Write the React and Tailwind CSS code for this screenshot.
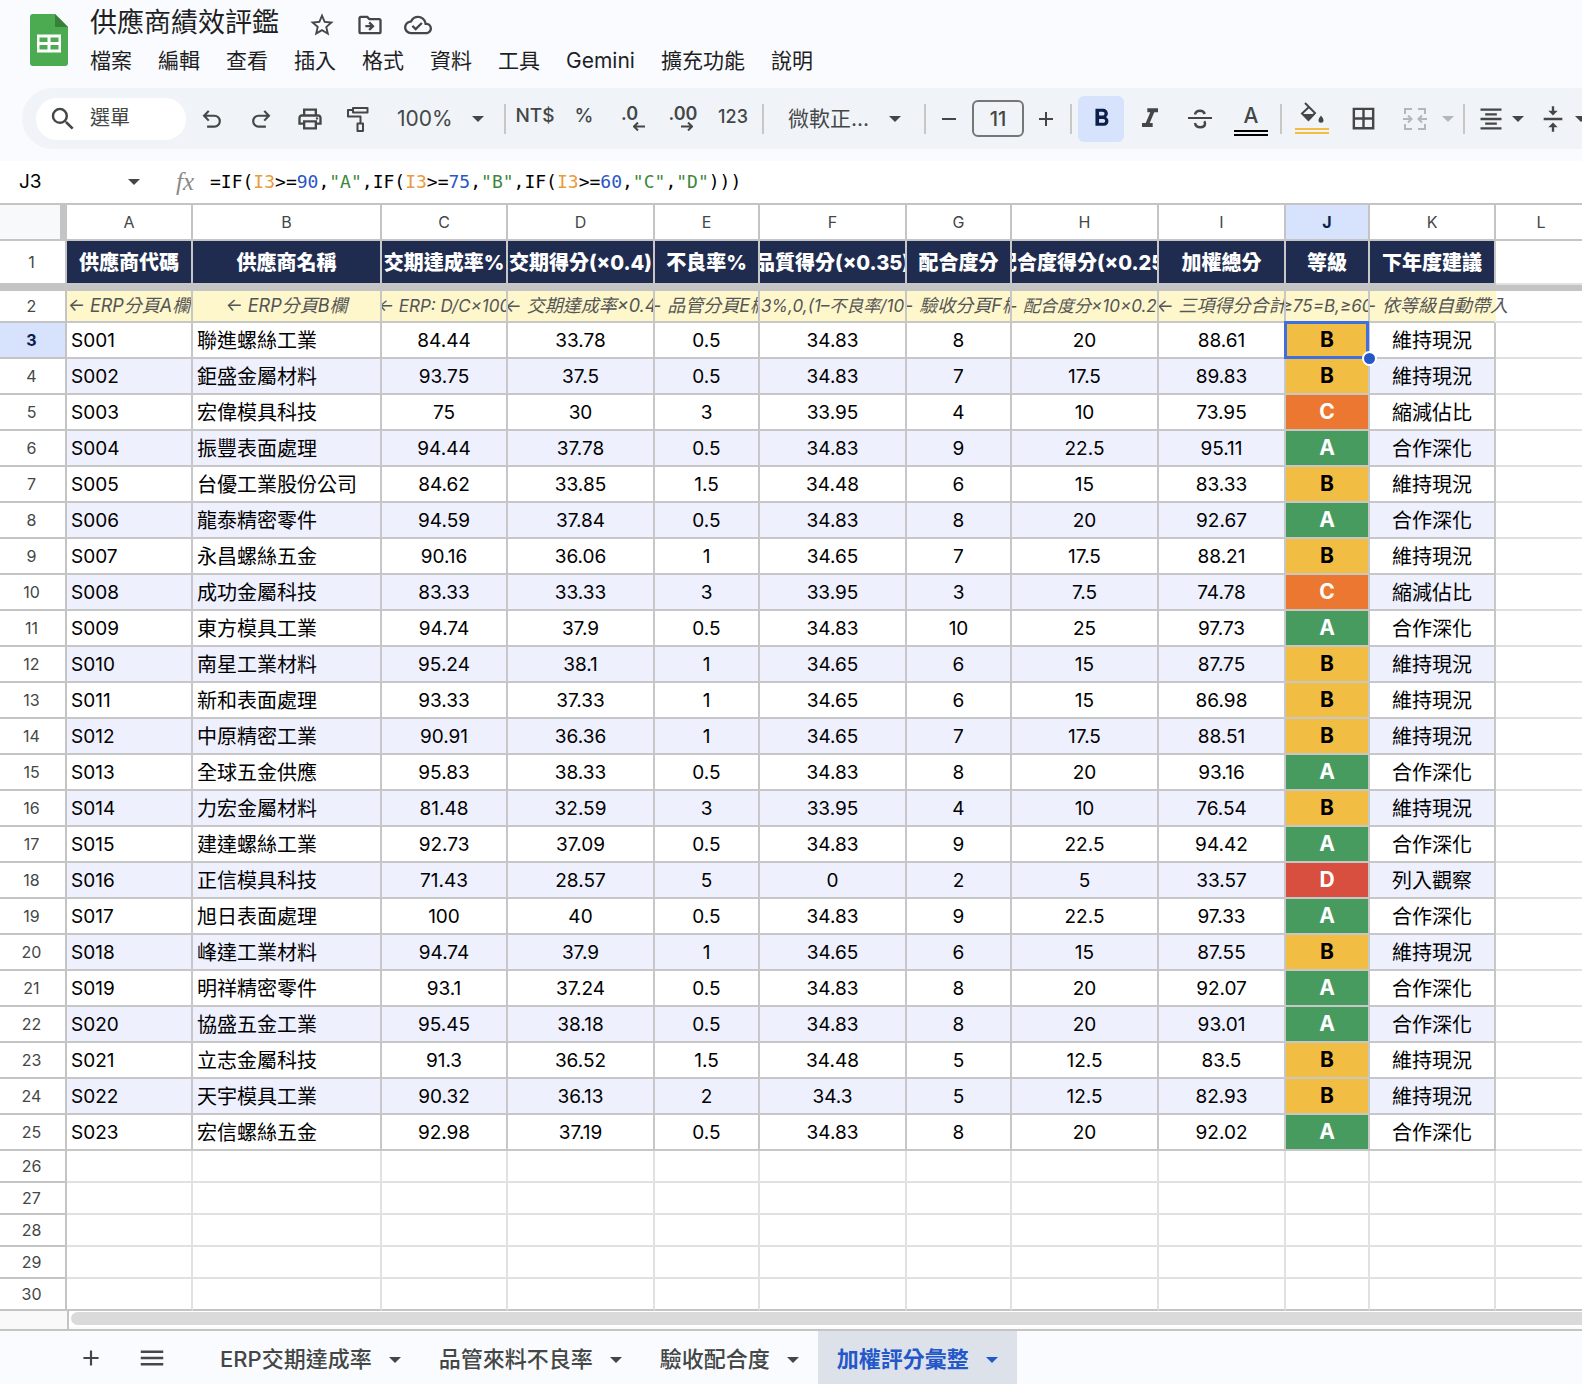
import React from "react";
import {
  MdStarBorder, MdOutlineDriveFileMove, MdOutlineCloudDone, MdSearch, MdOutlinePrint, MdFormatBold,
  MdFormatItalic, MdBorderAll, MdFormatAlignCenter,
  MdVerticalAlignCenter, MdAdd, MdRemove, MdMenu,
} from "react-icons/md";

const COLUMNS = [
  { id: "A", width: 126, title: "供應商代碼", note: "← ERP分頁A欄" },
  { id: "B", width: 189, title: "供應商名稱", note: "← ERP分頁B欄" },
  { id: "C", width: 126, title: "交期達成率%", note: "← ERP: D/C×100", compact: true },
  { id: "D", width: 147, title: "交期得分(×0.4)", note: "← 交期達成率×0.4" },
  { id: "E", width: 105, title: "不良率%", note: "← 品管分頁E欄" },
  { id: "F", width: 147, title: "品質得分(×0.35)", note: "3%,0,(1–不良率/10", compact: true },
  { id: "G", width: 105, title: "配合度分", note: "← 驗收分頁F欄" },
  { id: "H", width: 147, title: "配合度得分(×0.25)", note: "← 配合度分×10×0.25", compact: true },
  { id: "I", width: 127, title: "加權總分", note: "← 三項得分合計" },
  { id: "J", width: 84, title: "等級", note: "≥75=B,≥60", compact: true },
  { id: "K", width: 126, title: "下年度建議", note: "← 依等級自動帶入" },
];

const SUPPLIERS = [
  ["S001", "聯進螺絲工業", "84.44", "33.78", "0.5", "34.83", "8", "20", "88.61", "B"],
  ["S002", "鉅盛金屬材料", "93.75", "37.5", "0.5", "34.83", "7", "17.5", "89.83", "B"],
  ["S003", "宏偉模具科技", "75", "30", "3", "33.95", "4", "10", "73.95", "C"],
  ["S004", "振豐表面處理", "94.44", "37.78", "0.5", "34.83", "9", "22.5", "95.11", "A"],
  ["S005", "台優工業股份公司", "84.62", "33.85", "1.5", "34.48", "6", "15", "83.33", "B"],
  ["S006", "龍泰精密零件", "94.59", "37.84", "0.5", "34.83", "8", "20", "92.67", "A"],
  ["S007", "永昌螺絲五金", "90.16", "36.06", "1", "34.65", "7", "17.5", "88.21", "B"],
  ["S008", "成功金屬科技", "83.33", "33.33", "3", "33.95", "3", "7.5", "74.78", "C"],
  ["S009", "東方模具工業", "94.74", "37.9", "0.5", "34.83", "10", "25", "97.73", "A"],
  ["S010", "南星工業材料", "95.24", "38.1", "1", "34.65", "6", "15", "87.75", "B"],
  ["S011", "新和表面處理", "93.33", "37.33", "1", "34.65", "6", "15", "86.98", "B"],
  ["S012", "中原精密工業", "90.91", "36.36", "1", "34.65", "7", "17.5", "88.51", "B"],
  ["S013", "全球五金供應", "95.83", "38.33", "0.5", "34.83", "8", "20", "93.16", "A"],
  ["S014", "力宏金屬材料", "81.48", "32.59", "3", "33.95", "4", "10", "76.54", "B"],
  ["S015", "建達螺絲工業", "92.73", "37.09", "0.5", "34.83", "9", "22.5", "94.42", "A"],
  ["S016", "正信模具科技", "71.43", "28.57", "5", "0", "2", "5", "33.57", "D"],
  ["S017", "旭日表面處理", "100", "40", "0.5", "34.83", "9", "22.5", "97.33", "A"],
  ["S018", "峰達工業材料", "94.74", "37.9", "1", "34.65", "6", "15", "87.55", "B"],
  ["S019", "明祥精密零件", "93.1", "37.24", "0.5", "34.83", "8", "20", "92.07", "A"],
  ["S020", "協盛五金工業", "95.45", "38.18", "0.5", "34.83", "8", "20", "93.01", "A"],
  ["S021", "立志金屬科技", "91.3", "36.52", "1.5", "34.48", "5", "12.5", "83.5", "B"],
  ["S022", "天宇模具工業", "90.32", "36.13", "2", "34.3", "5", "12.5", "82.93", "B"],
  ["S023", "宏信螺絲五金", "92.98", "37.19", "0.5", "34.83", "8", "20", "92.02", "A"],
];

const GRADES = {
  A: { advice: "合作深化", tone: "bg-[#489b5f] text-white" },
  B: { advice: "維持現況", tone: "bg-[#f1bd42] text-black" },
  C: { advice: "縮減佔比", tone: "bg-[#ec7730] text-white" },
  D: { advice: "列入觀察", tone: "bg-[#d94f3f] text-white" },
};

const EMPTY_ROWS = [26, 27, 28, 29, 30];
const MENUS = ["檔案", "編輯", "查看", "插入", "格式", "資料", "工具", "Gemini", "擴充功能", "說明"];
const TABS = ["ERP交期達成率", "品管來料不良率", "驗收配合度", "加權評分彙整"];

const DARK = "border-r-2 border-b-2 border-[#c7c7c7]";
const LIGHT = "border-r-2 border-b-2 border-[#e1e1e1]";
const ROW_HEAD = "border-r-2 border-b-2 border-[#c4c4c4] p-0 pr-0.5 text-center text-base font-normal text-[#444746]";

function SheetsLogo() {
  return (
    <svg className="h-[52px] w-[38px] shrink-0" viewBox="0 0 38 52" aria-label="試算表">
      <path d="M3 0H25L38 13V49A3 3 0 0 1 35 52H3A3 3 0 0 1 0 49V3A3 3 0 0 1 3 0Z" fill="#4caa50" />
      <path d="M25 0L38 13H25Z" fill="#36803a" />
      <path d="M7 20.500H31V38.500H7ZM9.500 23.500V28H17.500V23.500ZM20.500 23.500V28H28.500V23.500ZM9.500 31V35.500H17.500V31ZM20.500 31V35.500H28.500V31Z" fill="#fff" fillRule="evenodd" />
    </svg>
  );
}

function UndoIcon({ className }) {
  return (
    <svg className={className} viewBox="0 0 24 24" fill="none" stroke="currentColor" strokeWidth="2">
      <path d="M7.500 19H14.200A4.800 4.800 0 0 0 14.200 9H5M9 4.500L4.700 9L9 13.500" />
    </svg>
  );
}

function RollerIcon() {
  return (
    <svg className="size-[26px]" viewBox="0 0 26 26" fill="none" stroke="currentColor" strokeWidth="2" strokeLinejoin="round">
      <path d="M8 2H22.500V6.500H8ZM8 4H3V10.500H15.500V17.500M12.500 17.500H18V25H12.500Z" />
    </svg>
  );
}

function StrikeIcon() {
  return (
    <svg className="size-6" viewBox="0 0 24 24" fill="none" stroke="currentColor" strokeWidth="2.500">
      <path d="M0 11H24" strokeWidth="2" />
      <path d="M7 7.500C7.500 5 9.500 3.800 12 3.800S16 5 16.800 7M7 16C7.500 18.800 9.500 20.200 12.300 20.200S17 18.800 17 16.500C17 15.500 16.700 14.800 16.200 14.200" />
    </svg>
  );
}

function FillIcon() {
  return (
    <svg className="h-[22px] w-[26px]" viewBox="0 0 26 22" fill="none" stroke="currentColor" strokeWidth="2">
      <path d="M6 1L16 11L9.500 18L3 11.500L10 5" />
      <path d="M3 12H16L9.500 19Z" fill="currentColor" stroke="none" />
      <path d="M22 13.500C23.500 15.500 24.500 16.800 24.500 18.200A2.500 2.500 0 0 1 19.500 18.200C19.500 16.800 20.500 15.500 22 13.500Z" fill="currentColor" stroke="none" />
    </svg>
  );
}

function DecimalIcon({ digits, increase }) {
  return (
    <span className="flex flex-col items-start">
      <span className="text-lg leading-4 font-semibold">{digits}</span>
      <svg className="ml-3 h-[9px] w-3" viewBox="0 0 12 9" fill="none" stroke="currentColor" strokeWidth="2">
        <path d={increase ? "M0 4.500H11M7 .5L11 4.500L7 8.500" : "M12 4.500H1M5 .5L1 4.500L5 8.500"} />
      </svg>
    </span>
  );
}

function MergeIcon() {
  return (
    <svg className="size-6" viewBox="0 0 24 24" fill="none" stroke="currentColor" strokeWidth="2">
      <path d="M9 2H2V7M2 17V22H9M15 2H22V7M22 17V22H15M0 12H8M5 8.500L8.500 12L5 15.500M24 12H16M19 8.500L15.500 12L19 15.500" />
    </svg>
  );
}

function Caret({ className = "" }) {
  return <span className={"inline-block border-x-6 border-t-6 border-x-transparent border-t-current " + className} />;
}

function Tool({ label, className = "justify-center", children }) {
  return (
    <button type="button" aria-label={label} className={"flex shrink-0 items-center " + className}>
      {children}
    </button>
  );
}

function Divider() {
  return <span className="h-[30px] w-0.5 shrink-0 bg-[#c7c7c5]" />;
}

function Header() {
  return (
    <header className="flex h-[88px] pl-[30px]">
      <div className="pt-3.5"><SheetsLogo /></div>
      <div className="pl-[22px]">
        <div className="flex h-[46px] items-center">
          <h1 className="text-[27px] leading-8 text-[#1f1f1f]">供應商績效評鑑</h1>
          <div className="ml-[29px] flex items-center gap-5 pt-1 text-[#444746]">
            <button type="button" aria-label="加星號"><MdStarBorder className="size-7" /></button>
            <button type="button" aria-label="移動"><MdOutlineDriveFileMove className="size-7" /></button>
            <button type="button" aria-label="查看文件狀態"><MdOutlineCloudDone className="size-7" /></button>
          </div>
        </div>
        <nav className="flex gap-[26px] text-[21px] leading-[30px] text-[#1f1f1f]">
          {MENUS.map((menu) => <button type="button" key={menu}>{menu}</button>)}
        </nav>
      </div>
    </header>
  );
}

function Toolbar() {
  return (
    <div className="ml-[22px] flex h-[61px] items-center overflow-hidden rounded-l-full bg-[#f0f4f9] pl-3.5 text-[#444746]">
      <label className="flex h-[42px] w-[150px] shrink-0 items-center rounded-full bg-white pl-3">
        <MdSearch className="size-[30px] shrink-0" />
        <input aria-label="選單" placeholder="選單" className="ml-3 w-16 pb-0.5 text-xl outline-none placeholder:text-[#444746]" />
      </label>
      <Tool label="復原" className="w-[52px] justify-center"><UndoIcon className="size-[26px]" /></Tool>
      <Tool label="取消復原" className="w-[46px] justify-center"><UndoIcon className="size-[26px] -scale-x-100" /></Tool>
      <Tool label="列印" className="w-[52px] justify-center"><MdOutlinePrint className="size-7" /></Tool>
      <Tool label="複製格式" className="w-[44px] justify-center"><RollerIcon /></Tool>
      <Tool label="縮放" className="w-[124px] justify-between pr-5 pl-[17px] text-[21px]">100%<Caret /></Tool>
      <Divider />
      <Tool label="貨幣格式" className="w-[58px] justify-center pb-1 text-[19px] font-medium">NT$</Tool>
      <Tool label="百分比格式" className="w-[40px] justify-center pb-1 text-[19px] font-medium">%</Tool>
      <Tool label="減少小數位數" className="w-[58px] justify-center"><DecimalIcon digits=".0" /></Tool>
      <Tool label="增加小數位數" className="w-[42px] justify-center"><DecimalIcon digits=".00" increase /></Tool>
      <Tool label="更多格式" className="w-[58px] justify-center pb-1 text-lg font-medium">123</Tool>
      <Divider />
      <Tool label="字型" className="w-[160px] justify-between pr-[23px] pl-6 text-[21px]">微軟正...<Caret /></Tool>
      <Divider />
      <Tool label="縮小字型" className="w-[46px] justify-center"><MdRemove className="size-6" /></Tool>
      <input aria-label="字型大小" defaultValue="11" className="h-[37px] w-[52px] shrink-0 rounded-md border-2 border-[#747775] text-center text-xl font-medium" />
      <Tool label="放大字型" className="w-[46px] justify-center pr-0.5"><MdAdd className="size-6" /></Tool>
      <Divider />
      <Tool label="粗體" className="mx-1.5 h-[46px] w-[46px] justify-center rounded-md bg-[#d7e2fc] text-[#0b1f4b]"><MdFormatBold className="size-[29px]" /></Tool>
      <Tool label="斜體" className="w-[40px] justify-center"><MdFormatItalic className="size-8" /></Tool>
      <Tool label="刪除線" className="w-[60px] justify-center"><StrikeIcon /></Tool>
      <Tool label="文字顏色" className="w-[42px] flex-col gap-1 pt-1">
        <span className="text-[21px] leading-5 font-medium">A</span>
        <span className="h-1.5 w-[34px] border-y-2 border-black" />
      </Tool>
      <span className="w-2 shrink-0" />
      <Divider />
      <Tool label="填滿顏色" className="w-[60px] flex-col gap-1 pb-0.5">
        <FillIcon />
        <span className="h-1.5 w-[34px] border-y-2 border-[#f1bd42]" />
      </Tool>
      <Tool label="框線" className="w-[42px] justify-center"><MdBorderAll className="size-[29px]" /></Tool>
      <Tool label="合併儲存格" className="w-[79px] gap-[15px] pl-[19px] text-[#b4b7ba]"><MergeIcon /><Caret /></Tool>
      <Divider />
      <Tool label="水平對齊" className="w-[72px] gap-[7px] pl-3"><MdFormatAlignCenter className="size-7" /><Caret /></Tool>
      <Tool label="垂直對齊" className="w-[60px] gap-2 pl-0.5"><MdVerticalAlignCenter className="size-7" /><Caret /></Tool>
    </div>
  );
}

function FormulaBar() {
  const ref = <span className="text-[#ec9a3c]">I3</span>;
  const num = (value) => <span className="text-[#2a56c6]">{value}</span>;
  const str = (value) => <span className="text-[#3c873c]">"{value}"</span>;
  return (
    <div className="flex h-[44px] items-center border-b-2 border-[#c4c4c4] bg-white">
      <button type="button" className="flex w-[158px] items-center justify-between pr-[18px] pl-[19px] text-[19px]">J3<Caret className="text-[#444746]" /></button>
      <span className="ml-[18px] w-[34px] font-['Liberation_Serif'] text-[25px] text-[#8a8a8a] italic">fx</span>
      <code className="font-['DejaVu_Sans_Mono'] text-lg">
        =IF({ref}&gt;={num(90)},{str("A")},IF({ref}&gt;={num(75)},{str("B")},IF({ref}&gt;={num(60)},{str("C")},{str("D")})))
      </code>
    </div>
  );
}

function Centered({ children }) {
  return <div className="flex justify-center whitespace-nowrap"><span>{children}</span></div>;
}

function Sheet() {
  return (
    <table className="w-full table-fixed border-separate border-spacing-0 bg-white">
      <colgroup>
        <col className="w-[67px]" />
        {COLUMNS.map((c) => <col key={c.id} style={{ width: c.width }} />)}
        <col />
      </colgroup>
      <thead>
        <tr className="h-[36px]">
          <th className="border-r-[7px] border-b-2 border-[#c4c4c4] bg-[#f8f9fa] p-0" />
          {COLUMNS.map((c) => (
            <th key={c.id} scope="col" className={"border-r-2 border-b-2 border-[#c4c4c4] p-0 text-base " + (c.id === "J" ? "bg-[#d7e2fc] font-bold text-[#0b1f4b]" : "font-normal text-[#444746]")}>{c.id}</th>
          ))}
          <th scope="col" className="border-b-2 border-[#c4c4c4] p-0 pl-1 text-base font-normal text-[#444746]">L</th>
        </tr>
      </thead>
      <tbody>
        <tr className="h-[44px]">
          <th scope="row" className={ROW_HEAD}>1</th>
          {COLUMNS.map((c) => (
            <td key={c.id} className={DARK + " overflow-hidden bg-[#1f2c50] p-0 pt-0.5 text-xl font-extrabold text-white"}><Centered>{c.title}</Centered></td>
          ))}
          <td className="border-b-2 border-[#e1e1e1] p-0" />
        </tr>
        <tr className="h-1.5"><td colSpan={13} className="bg-[#c4c4c4] p-0" /></tr>
        <tr className="h-[32px]">
          <th scope="row" className={ROW_HEAD}>2</th>
          {COLUMNS.map((c) => (
            <td key={c.id} className={DARK + " bg-[#fdf7cb] p-0 leading-[26px] text-[#555] italic " + (c.compact ? "text-[17px] " : "text-lg ") + (c.id === "K" ? "border-r-[#fdf7cb]" : "overflow-hidden")}>
              {c.id === "K" ? (
                <div className="relative z-10 flex w-[138px] justify-end overflow-hidden whitespace-nowrap"><span>{c.note}</span></div>
              ) : <Centered>{c.note}</Centered>}
            </td>
          ))}
          <td className="border-b-2 border-[#e1e1e1] p-0" />
        </tr>
        {SUPPLIERS.map((row, i) => {
          const grade = row[9];
          const fill = i % 2 ? " bg-[#eef0fe]" : " bg-white";
          const selected = i === 0;
          return (
            <tr key={row[0]} className="h-[36px]">
              <th scope="row" className={ROW_HEAD + (selected ? " bg-[#d7e2fc] font-bold! text-[#0b1f4b]!" : "")}>{i + 3}</th>
              {row.slice(0, 9).map((value, j) => (
                <td key={j} className={DARK + fill + " p-0 pt-0.5 leading-6 whitespace-nowrap " + (j === 1 ? "pl-1 text-xl" : j === 0 ? "pl-1 text-[19px]" : "text-center text-[19px]")}>{value}</td>
              ))}
              <td className={DARK + " relative p-0 text-center text-[21px] leading-6 font-bold " + GRADES[grade].tone}>
                {grade}
                {selected && <span className="absolute -top-0.5 -right-px -bottom-0.5 -left-0.5 z-10 border-3 border-[#3f6fe0]" />}
                {selected && <span className="absolute -right-[9px] -bottom-[9px] z-20 size-[15px] rounded-full border-2 border-white bg-[#2457c9]" />}
              </td>
              <td className={DARK + fill + " p-0 pt-0.5 text-center text-xl leading-6"}>{GRADES[grade].advice}</td>
              <td className="border-b-2 border-[#e1e1e1] p-0" />
            </tr>
          );
        })}
        {EMPTY_ROWS.map((n) => (
          <tr key={n} className="h-[32px]">
            <th scope="row" className={ROW_HEAD}>{n}</th>
            {COLUMNS.map((c) => <td key={c.id} className={LIGHT + " p-0 " + (n === 30 ? "border-b-[#c4c4c4]" : "")} />)}
            <td className={"border-b-2 p-0 " + (n === 30 ? "border-[#c4c4c4]" : "border-[#e1e1e1]")} />
          </tr>
        ))}
      </tbody>
    </table>
  );
}

function ScrollTrack() {
  return (
    <div className="flex h-5 border-b-2 border-[#c4c4c4] bg-[#fbfbfb]">
      <div className="w-[69px] shrink-0 border-r-2 border-[#c4c4c4] bg-[#f9f9f9]" />
      <div className="h-4 grow bg-white pt-px pl-0.5"><div className="h-[13px] rounded-l-full bg-[#dadada]" /></div>
    </div>
  );
}

function SheetTabs() {
  return (
    <footer className="flex h-[53px] items-stretch pl-[78px] text-[#444746]">
      <button type="button" aria-label="新增工作表" className="flex items-center"><MdAdd className="size-[26px]" /></button>
      <button type="button" aria-label="所有工作表" className="ml-[33px] flex items-center"><MdMenu className="size-[30px]" /></button>
      <div className="ml-[34px] flex">
        {TABS.map((tab, i) => (
          <button type="button" key={tab} className={"flex items-center gap-[17px] px-[19px] pt-1 text-[22px] " + (i === 3 ? "bg-[#dde2ea] font-bold text-[#2457c9]" : "font-medium")}>
            {tab}<Caret />
          </button>
        ))}
      </div>
    </footer>
  );
}

export default function App() {
  return (
    <div className="min-h-screen w-full overflow-hidden bg-[#f9fbff] font-[Inter,'Noto_Sans_CJK_TC',sans-serif] text-black">
      <Header />
      <Toolbar />
      <div className="h-3" />
      <FormulaBar />
      <Sheet />
      <ScrollTrack />
      <SheetTabs />
    </div>
  );
}
